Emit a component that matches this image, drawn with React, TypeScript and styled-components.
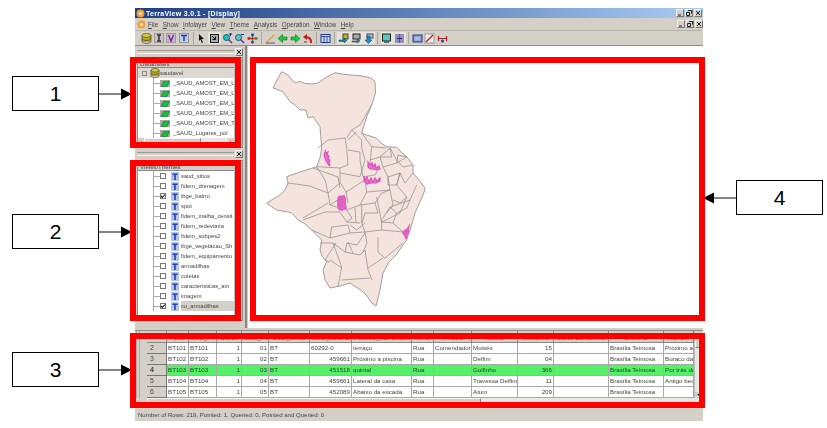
import React from 'react';
import styled, {createGlobalStyle} from 'styled-components';

const GlobalStyle = createGlobalStyle`
    html, body {
        margin: 0;
        padding: 0;
        background: #fff;
    }
`;

const ui = '"Liberation Sans", Arial, sans-serif';
const face = '#d4d0c8';

const Page = styled.div`
    position: relative;
    width: 827px;
    height: 428px;
    display: flex;
    overflow: hidden;
    background: #fff;
    font-family: ${ui};
`;

const LeftColumn = styled.div`
    width: 135px;
    box-sizing: border-box;
    padding: 76px 0 0 12px;
    display: flex;
    flex-direction: column;
    gap: 103px;
    flex: none;
`;

const RightColumn = styled.div`
    flex: 1;
    padding-top: 180px;
`;

const Callout = styled.div`
    display: flex;
    align-items: center;
    height: 35px;
`;

const CalloutBox = styled.div`
    width: 87px;
    height: 35px;
    box-sizing: border-box;
    border: 1px solid #000;
    display: flex;
    align-items: center;
    justify-content: center;
    font-size: 21px;
    color: #000;
    flex: none;
`;

const Frame = styled.div<{$x: number; $y: number; $w: number; $h: number}>`
    position: absolute;
    left: ${p => p.$x}px;
    top: ${p => p.$y}px;
    width: ${p => p.$w}px;
    height: ${p => p.$h}px;
    box-sizing: border-box;
    border: 6px solid #ff0000;
`;

const AppWindow = styled.div`
    width: 568px;
    height: 413px;
    margin-top: 8px;
    flex: none;
    display: flex;
    flex-direction: column;
    background: ${face};
    filter: blur(0.45px);
    color: #444;
    font-size: 6.2px;
`;

const TitleBar = styled.div`
    height: 10px;
    display: flex;
    align-items: center;
    padding: 0 1px;
    background: linear-gradient(90deg, #1f3f82 0%, #5f82bb 50%, #a9cdf3 100%);
    color: #fff;
    font-weight: bold;
    font-size: 7px;
    gap: 1px;
`;

const TitleText = styled.span`
    flex: 1;
    letter-spacing: 0.3px;
`;

const WinButtons = styled.div`
    display: flex;
    gap: 1px;
`;

const WinButton = styled.div`
    width: 8px;
    height: 8px;
    background: ${face};
    border: 1px solid;
    border-color: #f4f2ee #777 #777 #f4f2ee;
    box-sizing: border-box;
    display: flex;
    align-items: center;
    justify-content: center;
    svg {
        display: block;
    }
`;

const MenuBar = styled.div`
    height: 13px;
    display: flex;
    align-items: center;
    padding: 0 0 0 2px;
    font-size: 6.3px;
    border-bottom: 1px solid #b5b2aa;
    box-sizing: border-box;
`;

const MenuItems = styled.div`
    flex: 1;
    display: flex;
    gap: 4.5px;
    margin-left: 2px;
    padding-top: 1px;
    u {
        text-decoration: underline;
    }
`;

const Toolbar = styled.div`
    height: 15px;
    box-sizing: border-box;
    display: flex;
    align-items: center;
    padding-left: 5px;
    border-bottom: 1px solid #8f8d87;
`;

const ToolGroup = styled.div`
    display: flex;
`;

const ToolDivider = styled.div`
    width: 1px;
    height: 12px;
    margin: 0 2.15px;
    background: #a8a59e;
`;

const ToolButton = styled.div<{$on?: boolean}>`
    width: 12.6px;
    height: 12px;
    display: flex;
    align-items: center;
    justify-content: center;
    background: ${p => (p.$on ? '#e6e3dd' : 'transparent')};
    svg {
        display: block;
    }
`;

const Workspace = styled.div`
    height: 282px;
    display: flex;
`;

const Dock = styled.div`
    width: 110px;
    flex: none;
    box-sizing: border-box;
    padding-left: 2px;
    display: flex;
    flex-direction: column;
`;

const DockHandle = styled.div<{$height: number}>`
    height: ${p => p.$height}px;
    flex: none;
    display: flex;
    align-items: center;
    gap: 1px;
    padding-right: 2px;
`;

const Grip = styled.div`
    flex: 1;
    height: 2px;
    border-top: 1px solid #9c9a94;
    border-bottom: 1px solid #f5f4f0;
`;

const DockPanel = styled.div<{$height: number}>`
    height: ${p => p.$height}px;
    width: 106px;
    flex: none;
    display: flex;
    background: #fff;
    border: 1px solid #8f8d87;
    box-sizing: border-box;
    overflow: hidden;
`;

const PanelBody = styled.div`
    flex: 1;
    min-width: 0;
    display: flex;
    flex-direction: column;
`;

const PanelHeader = styled.div`
    height: 10px;
    flex: none;
    background: ${face};
    border-bottom: 1px solid #888;
    box-sizing: border-box;
    line-height: 11px;
    padding-left: 2px;
    overflow: hidden;
    white-space: nowrap;
`;

const TreeRows = styled.div`
    flex: 1;
    min-height: 0;
    overflow: hidden;
`;

const TreeRow = styled.div<{$root?: boolean}>`
    height: 10px;
    display: flex;
    align-items: center;
    white-space: nowrap;
    font-size: 5.8px;
    padding-left: ${p => (p.$root ? 4 : 15)}px;
    background: ${p => (p.$root ? '#ddd9d2' : 'transparent')};
`;

const Connector = styled.div`
    width: 7px;
    height: 10px;
    flex: none;
    box-sizing: border-box;
    border-left: 1px solid #aaa;
    position: relative;
    &::after {
        content: '';
        position: absolute;
        left: 0;
        top: 5px;
        width: 7px;
        border-top: 1px solid #aaa;
    }
`;

const Expander = styled.div`
    width: 5px;
    height: 5px;
    box-sizing: border-box;
    border: 1px solid #888;
    margin-right: 3px;
    flex: none;
`;

const ThemeLabel = styled.span<{$selected?: boolean}>`
    margin-left: 2px;
    flex: 1;
    align-self: stretch;
    line-height: 10px;
    background: ${p => (p.$selected ? '#d4d0c8' : 'transparent')};
`;

const CheckBox = styled.div`
    width: 6px;
    height: 6px;
    flex: none;
    box-sizing: border-box;
    border: 1px solid #777;
    background: #fff;
    margin-right: 5px;
    position: relative;
    svg {
        position: absolute;
        left: -1px;
        top: -1px;
    }
`;

const HScroll = styled.div<{$height: number}>`
    height: ${p => p.$height}px;
    flex: none;
    background: #e9e7e2;
    display: flex;
    align-items: stretch;
`;

const ScrollThumb = styled.div<{$grow: number}>`
    flex: ${p => p.$grow};
    background: ${face};
    border: 1px solid;
    border-color: #f5f4f0 #888 #888 #f5f4f0;
    box-sizing: border-box;
`;

const ScrollTrack = styled.div<{$grow: number}>`
    flex: ${p => p.$grow};
`;

const ScrollArrow = styled.div<{$dir: 'left' | 'right' | 'up' | 'down'}>`
    width: ${p => (p.$dir === 'up' || p.$dir === 'down' ? '100%' : '6px')};
    height: ${p => (p.$dir === 'up' || p.$dir === 'down' ? '6px' : 'auto')};
    flex: none;
    background: ${face};
    display: flex;
    align-items: center;
    justify-content: center;
    &::after {
        content: '';
        border: 2px solid transparent;
        ${p => (p.$dir === 'left' ? 'border-right-color: #111; border-left-width: 0;' : '')}
        ${p => (p.$dir === 'right' ? 'border-left-color: #111; border-right-width: 0;' : '')}
        ${p => (p.$dir === 'up' ? 'border-bottom-color: #111; border-top-width: 0;' : '')}
        ${p => (p.$dir === 'down' ? 'border-top-color: #111; border-bottom-width: 0;' : '')}
    }
`;

const VScroll = styled.div`
    width: 8px;
    flex: none;
    background: #e9e7e2;
    border-left: 1px solid #bbb;
    box-sizing: border-box;
    display: flex;
    flex-direction: column;
`;

const Sash = styled.div`
    width: 3px;
    flex: none;
    box-sizing: border-box;
    border-left: 2px solid #8a8883;
`;

const MapPane = styled.div`
    flex: 1;
    background: #fff;
    svg {
        display: block;
    }
`;

const Splitter = styled.div`
    height: 3px;
    flex: none;
    border-bottom: 1px solid #8f8d87;
    box-sizing: border-box;
`;

const GridArea = styled.div`
    height: 67px;
    flex: none;
    display: flex;
`;

const Gutter = styled.div`
    width: 12px;
    flex: none;
    box-sizing: border-box;
    margin-left: 1px;
    margin-right: -1px;
    background: linear-gradient(90deg, #aaa 0 1px, ${face} 1px 3px, #aaa 3px 4px, ${face} 4px);
`;

const GridScroll = styled.div`
    width: 547px;
    flex: none;
    overflow: hidden;
    background: #fff;
`;

const Grid = styled.table`
    table-layout: fixed;
    width: 547px;
    border-collapse: separate;
    border-spacing: 0;
    font-size: 6.2px;
    color: #444;
`;

const HeadCell = styled.th`
    height: 12px;
    line-height: 9px;
    padding: 2px 1px 0;
    font-weight: normal;
    text-align: center;
    white-space: nowrap;
    overflow: hidden;
    background: ${face};
    border-right: 1px solid #888;
    border-bottom: 1px solid #888;
    box-sizing: border-box;
`;

const Cell = styled.td<{$right?: boolean; $green?: boolean}>`
    height: 11px;
    line-height: 10px;
    padding: 0 1px;
    white-space: nowrap;
    overflow: hidden;
    text-align: ${p => (p.$right ? 'right' : 'left')};
    background: ${p => (p.$green ? '#55f068' : '#fff')};
    color: ${p => (p.$green ? '#224422' : '#444')};
    border-right: 1px solid #aaa;
    border-bottom: 1px solid #aaa;
    box-sizing: border-box;
`;

const RowHead = styled.td<{$current?: boolean}>`
    height: 11px;
    line-height: 10px;
    padding: 0 0 0 3px;
    font-size: 7px;
    font-weight: ${p => (p.$current ? 'bold' : 'normal')};
    background: ${face};
    border-right: 1px solid #777;
    border-bottom: 1px solid #777;
    box-sizing: border-box;
`;

const GridBar = styled.div`
    height: 7px;
    flex: none;
    margin-left: 12px;
    display: flex;
    background: #e9e7e2;
`;

const StatusBar = styled.div`
    height: 16px;
    flex: none;
    box-sizing: border-box;
    padding: 3px 0 0 3px;
    display: flex;
    align-items: center;
    font-size: 6.05px;
    color: #444;
    border-top: 1px solid #efede8;
`;

const Close = () => (
    <svg width="6" height="6" viewBox="0 0 6 6">
        <path d="M1 1l4 4M5 1l-4 4" stroke="#222" strokeWidth="1"/>
    </svg>
);
const Minimize = () => (
    <svg width="6" height="6" viewBox="0 0 6 6">
        <path d="M1 5h3" stroke="#222" strokeWidth="1"/>
    </svg>
);
const Restore = () => (
    <svg width="6" height="6" viewBox="0 0 6 6">
        <path d="M2 .5h3.5v3M.5 2.5h3v3h-3z" stroke="#222" strokeWidth="1" fill="none"/>
    </svg>
);

const Flower = () => (
    <svg width="9" height="9" viewBox="0 0 9 9">
        <circle cx="4.5" cy="4.5" r="4" fill="#f0a040"/>
        <circle cx="4.5" cy="4.5" r="1.5" fill="#ffe8b0"/>
    </svg>
);

const DbIcon = ({size = 10}: {size?: number}) => (
    <svg width={size} height={size} viewBox="0 0 11 11">
        <rect x="1" y="2" width="9" height="7" fill="#b8a818"/>
        <ellipse cx="5.5" cy="2.5" rx="4.5" ry="2" fill="#d8cc30" stroke="#444" strokeWidth=".7"/>
        <path d="M1 2.5v6c0 1 2 2 4.5 2s4.5-1 4.5-2v-6M1 5.5c0 1 2 2 4.5 2s4.5-1 4.5-2" fill="none" stroke="#444" strokeWidth=".7"/>
    </svg>
);

const LayerIcon = () => (
    <svg width="10" height="7" viewBox="0 0 10 7" style={{flex: 'none', marginRight: 3}}>
        <rect width="10" height="7" fill="#a8a8a8"/>
        <path d="M1 6.5L3.5 1.5H9.5L7 6.5z" fill="#14c038" stroke="#0a6a28" strokeWidth=".5"/>
    </svg>
);

const ThemeIcon = () => (
    <svg width="8" height="9" viewBox="0 0 8 9" style={{flex: 'none'}}>
        <rect width="8" height="9" fill="#b4c4dc"/>
        <path d="M1.5 1.5h5v1.4h-1.7v5h-1.6v-5h-1.7z" fill="#1c3fc8"/>
    </svg>
);

const Check = () => (
    <svg width="6" height="6" viewBox="0 0 6 6">
        <path d="M1 3l1.4 1.5L5 1.5" fill="none" stroke="#111" strokeWidth="1.1"/>
    </svg>
);

const letter = (bg: string, stroke: string, d: string) => (
    <svg width="10" height="10" viewBox="0 0 10 10">
        <rect x=".5" y=".5" width="9" height="9" fill={bg} stroke="#9a9a9a"/>
        <path d={d} fill="none" stroke={stroke} strokeWidth="1.5"/>
    </svg>
);

const sketch = (children: React.ReactNode) => (
    <svg width="11" height="11" viewBox="0 0 11 11">{children}</svg>
);

const tools: {on?: boolean; glyph: React.ReactNode}[][] = [
    [
        {glyph: <DbIcon size={11}/>},
        {glyph: letter('#c8c4bc', '#333', 'M3 2h4M5 2v6M3 8h4')},
        {glyph: letter('#c8bcd0', '#8020a0', 'M2.5 2l2.5 6 2.5-6')},
        {glyph: letter('#c0cce4', '#1c3fc8', 'M2 2.5h6M5 2.5v5.5')},
    ],
    [
        {glyph: sketch(<path d="M3 1l5 5H5.5l1.5 3.5-1.2.5L4.5 6.5 3 8z" fill="#111"/>)},
        {on: true, glyph: sketch(<g><rect x="1.5" y="1.5" width="8" height="8" fill="#aaa" stroke="#222"/><path d="M3 3l3.5 3.5M6.5 3.5v3h-3" stroke="#111" fill="none"/></g>)},
        {glyph: sketch(<g><circle cx="4.5" cy="4.5" r="3" fill="#20c8b8" stroke="#08607a"/><path d="M6.5 6.5L10 10" stroke="#8020a0" strokeWidth="1.4"/><path d="M7 1h3M8.5 0v3" stroke="#1030c0"/></g>)},
        {glyph: sketch(<g><circle cx="4.5" cy="4.5" r="3" fill="#60c8c0" stroke="#08607a"/><path d="M6.5 6.5L10 10" stroke="#8020a0" strokeWidth="1.4"/><path d="M7 1.5h3" stroke="#1030c0"/></g>)},
        {glyph: sketch(<g><path d="M5.5 1v9" stroke="#20a040" strokeWidth="1.4"/><path d="M1 5.5h9" stroke="#d02020" strokeWidth="1.4"/><circle cx="5.5" cy="1.8" r="1.4" fill="#1030c0"/><circle cx="1.8" cy="5.5" r="1.4" fill="#d02020"/><circle cx="9.2" cy="5.5" r="1.4" fill="#20a040"/><circle cx="5.5" cy="9.2" r="1.4" fill="#7020a0"/></g>)},
    ],
    [
        {glyph: sketch(<g><path d="M1 10L9.5 1.5" stroke="#d8b020" strokeWidth="1.6"/><path d="M1 10h9" stroke="#7040c0" strokeWidth="1"/></g>)},
        {glyph: sketch(<path d="M1 5.5L5.5 1.5v2.5H10v3H5.5v2.5z" fill="#18d030" stroke="#0a7018" strokeWidth=".6"/>)},
        {glyph: sketch(<path d="M10 5.5L5.5 1.5v2.5H1v3h4.5v2.5z" fill="#18d030" stroke="#0a7018" strokeWidth=".6"/>)},
        {glyph: sketch(<g><path d="M9 10C9.5 6 7 4 4 4" fill="none" stroke="#c81818" strokeWidth="2"/><path d="M1 4l4-3v6z" fill="#c81818"/><path d="M2 9h3" stroke="#444"/></g>)},
    ],
    [
        {glyph: sketch(<g><rect x="1" y="1.5" width="9" height="8" fill="#c8d8f0" stroke="#203a90"/><path d="M1 3.5h9M4 3.5v6M7 3.5v6" stroke="#203a90" strokeWidth=".8"/></g>)},
    ],
    [
        {on: true, glyph: sketch(<g><rect x="5" y="1" width="5" height="5" fill="#c8b020" stroke="#444"/><path d="M1 7h5V5l3 2.5-3 2.5V8.5H1z" fill="#1890a8" stroke="#083048" strokeWidth=".5"/></g>)},
        {on: true, glyph: sketch(<g><rect x="2" y="1" width="7" height="5" fill="#aaa" stroke="#222"/><path d="M1 8h5V6l3 2-3 2V9H1z" fill="#1890a8" stroke="#083048" strokeWidth=".5"/></g>)},
        {on: true, glyph: sketch(<g><rect x="4" y="1" width="6" height="4" fill="#b0c8e0" stroke="#445"/><path d="M4 3h3v4h2l-3.5 3.5L2 7h2z" fill="#1890d0" stroke="#083048" strokeWidth=".5"/></g>)},
    ],
    [
        {on: true, glyph: sketch(<g><rect x="1.5" y="1" width="8" height="7" fill="#58c8c0" stroke="#222"/><rect x="3" y="8" width="5" height="2" fill="#666"/></g>)},
        {on: true, glyph: sketch(<g><rect x="1" y="1" width="9" height="9" fill="#9090b0"/><path d="M5.5 1v9" stroke="#d02090" strokeWidth="1.2"/><path d="M3 5.5h5" stroke="#2020c0"/></g>)},
    ],
    [
        {glyph: sketch(<g><rect x="1" y="2" width="9" height="7" fill="#8090c8" stroke="#203a90"/><rect x="2.5" y="3.5" width="6" height="4" fill="#b0b8e0"/></g>)},
        {glyph: sketch(<g><rect x="1" y="1" width="9" height="9" fill="#f0efec" stroke="#999"/><path d="M2 9L9 2" stroke="#c02020" strokeWidth="1.4"/></g>)},
        {glyph: sketch(<g><path d="M1.5 3v5M9.5 3v5M1.5 5.5h8" stroke="#b02020" strokeWidth="1.2"/><circle cx="5.5" cy="8" r="1.6" fill="#2040d0"/></g>)},
    ],
];

const menus: [string, string][] = [
    ['F', 'ile'], ['S', 'how'], ['I', 'nfolayer'], ['V', 'iew'], ['T', 'heme'],
    ['A', 'nalysis'], ['O', 'peration'], ['W', 'indow'], ['H', 'elp'],
];

const layers = ['_SAUD_AMOST_EM_L', '_SAUD_AMOST_EM_L', '_SAUD_AMOST_EM_L', '_SAUD_AMOST_EM_L', '_SAUD_AMOST_EM_T', '_SAUD_Lugares_pol'];

const themes: {name: string; checked?: boolean; selected?: boolean}[] = [
    {name: 'saud_sitios'},
    {name: 'fidem_drenagem'},
    {name: 'ibge_bairro', checked: true},
    {name: 'spot'},
    {name: 'fidem_malha_censit'},
    {name: 'fidem_redeviaria'},
    {name: 'fidem_subpes2'},
    {name: 'ibge_vegetacao_Sh'},
    {name: 'fidem_equipamento'},
    {name: 'armadilhas'},
    {name: 'coletas'},
    {name: 'caracteristicas_am'},
    {name: 'imagem'},
    {name: 'co_armadilhas', checked: true, selected: true},
];

const columns = [
    {w: 20, t: ''}, {w: 22, t: 'Atual'}, {w: 28, t: 'COD_PT'}, {w: 25, t: 'CONS'}, {w: 27, t: 'NUM_PT'},
    {w: 41, t: 'COD_SITIO'}, {w: 42, t: 'COD_LOCAL'}, {w: 60, t: 'PONTO_REFEREN'}, {w: 22, t: 'TIPO'},
    {w: 38, t: 'TITULO'}, {w: 46, t: 'NOME'}, {w: 36, t: 'NUMERO'}, {w: 55, t: 'COMPLEMENTO'},
    {w: 55, t: 'BAIRRO'}, {w: 30, t: 'REFER'},
];

const rightAligned = new Set([2, 3, 10]);

const rows: {n: number; cells: string[]; current?: boolean}[] = [
    {n: 2, cells: ['BT101', 'BT101', '1', '01', 'BT', '60292-0', 'terraço', 'Rua', 'Comendador', 'Moisés', '15', '', 'Brasília Teimosa', 'Próximo ac']},
    {n: 3, cells: ['BT102', 'BT102', '1', '02', 'BT', '459661', 'Próximo a piscina', 'Rua', '', 'Delfim', '04', '', 'Brasília Teimosa', 'Buraco da']},
    {n: 4, current: true, cells: ['BT103', 'BT103', '1', '03', 'BT', '451518', 'quintal', 'Rua', '', 'Golfinho', '366', '', 'Brasília Teimosa', 'Por trás do']},
    {n: 5, cells: ['BT104', 'BT104', '1', '04', 'BT', '459661', 'Lateral da casa', 'Rua', '', 'Travessa Delfim', '11', '', 'Brasília Teimosa', 'Antigo bec']},
    {n: 6, cells: ['BT105', 'BT105', '1', '05', 'BT', '452089', 'Abaixo da escada', 'Rua', '', 'Atum', '209', '', 'Brasília Teimosa', '']},
];

const outline = 'M281.7 71.7L288 75 291 79 295 82.7 300 81.5 305 83.3 312 84 318 83 325 78 335 72.7 342 74 350 75 358 75.5 365 76.7 371 78 375 81.7 375.5 93 371.7 105 366.7 116.7 361.7 133.3 370 136 376.7 138.3 381 143 386.7 146.7 396.7 147.3 401 152 406.7 156.7 413 165 413 173 419 180 425 188 425 190 420 202 415 213 411 227 406.7 240 403 245 396 255 389 262 383 273 380 290 376 306 371.7 303 367 296 363 291.7 350 283 340 286 330 288 325 280 323 270 326.7 261.7 322 256 320 250 321.7 240 311.7 230 305 224 298 220 292 213 286.7 211.7 276.7 210 266.7 203.3 273 199 280 195 285 190 288 183 286.7 176.7 300 172 316.7 166.7 320 158 321.7 148 320 126.7 313 116.7 308 118 306 110 300 110 295 105 290 101.7 283 91.7 273 88 277 80z';

const inner = [
    'M371.7 105L360 125 351.7 130 346.7 138',
    'M318 148L328 140 345 138 346.7 148 348 165 340 168 316.7 166.7',
    'M351.7 130L361.7 140 361.7 148 365 160 360 176.7 340 173',
    'M361.7 133L371.7 146.7 386.7 148',
    'M371.7 146.7L370 163 378 170 375 175 363 177',
    'M380 157L390 148M380 157L383 167 396.7 163 406.7 157',
    'M390 148L396.7 160 403 167 413 165',
    'M383 167L388 177 400 173 405 183 413 173',
    'M340 168L340 182 346 192 365 180',
    'M348 150L360 152 360 160 363 177',
    'M356.7 131.7L348 140',
    'M380 157L370 160',
    'M390 148L391.7 157 380 157',
    'M396.7 163L398 155 406.7 157',
    'M388 177L388 185 396.7 185 400 173',
    'M313 168L338 177 340 188',
    'M328 193L340 183M345 195L330 205',
    'M328 203L303 218',
    'M328 193L330 205 346.7 210 360 205 366.7 192 365 180',
    'M303 220L325 212 340 212 346.7 222 360 223',
    'M288 183L310 186 328 193',
    'M331.7 227L348 225 350 233',
    'M311.7 230L330 238 331.7 227',
    'M330 238L350 233 365 232 381.7 230 403 232',
    'M381.7 230L381.7 220 390 207 410 200 416.7 185',
    'M333 243L345 252 360 255 365 250 368 270 372 280',
    'M341.7 280L370 278',
    'M333 243L341.7 267 338 287',
    'M378 237L378 252 385 258 403 243',
    'M368 268L383 258',
    'M365 232L367 243 363 252',
    'M361.7 205L361.7 223 365 232',
    'M376.7 197L381.7 223',
    'M366.7 192L390 190 393 205 386.7 213',
    'M396.7 185L406.7 197 400 213 382 222',
    'M388 177L390 190M400 173L396.7 185',
    'M346 192L348 203M355 208L356 222',
    'M316.7 166.7L325 180 328 193',
    'M346.7 210L352 218 346.7 222',
    'M360 205L375 203 378 213 365 213 362 223',
    'M375 203L381.7 193 390 190',
    'M390 207L396.7 213 406.7 208 410 200',
    'M393 200L400 203 406.7 197',
    'M396.7 213L393 223 383 222',
    'M393 223L403 232',
    'M350 225L356.7 230 365 223',
    'M348 242L353 253',
    'M330 262L325 260 336 243',
    'M345 252L347 243 357 245 365 233',
    'M333 243L320 243',
    'M341.7 268L330 260',
];

const pinkLace = [
    'M325 150l1 3 2-1-1 3 2 1-1 3 2 1-1 3 1 3-2-2-2-3-1-3-1-3 1-3',
    'M368 162l2 3 2-2 1 4 2-3 1 4 3-2 1 3-4 1-3-1-3 0-2-2z',
    'M364 176l1 4 2-3 2 5 2-4 2 4 2-4 2 3 3-3 0 3-4 2-5 0-4 1-3-3z',
];

const pinkSolid = [
    'M338 196l6-1 2 3 0 5 1 6-3 1-2 1-4-1-1-5 0-5z',
    'M403 231l4-3 3-5-1 9-2 6-1 2-2-4-2-3z',
];

const Arrow = ({flip}: {flip?: boolean}) => (
    <svg width="33" height="14" viewBox="0 0 33 14" style={{flex: 'none', transform: flip ? 'scaleX(-1)' : undefined}}>
        <path d="M0 7H22" stroke="#333" strokeWidth="1.2"/>
        <path d="M22 1.5L33 7 22 12.5z" fill="#000"/>
    </svg>
);

const App: React.FC = () => (
    <Page>
        <GlobalStyle/>
        <LeftColumn>
            {['1', '2', '3'].map(n => (
                <Callout key={n}>
                    <CalloutBox>{n}</CalloutBox>
                    <Arrow/>
                </Callout>
            ))}
        </LeftColumn>

        <AppWindow>
            <TitleBar>
                <Flower/>
                <TitleText>TerraView 3.0.1 - [Display]</TitleText>
                <WinButtons>
                    <WinButton><Minimize/></WinButton>
                    <WinButton><Restore/></WinButton>
                    <WinButton><Close/></WinButton>
                </WinButtons>
            </TitleBar>
            <MenuBar>
                <Flower/>
                <MenuItems>
                    {menus.map(([key, rest]) => <span key={key}><u>{key}</u>{rest}</span>)}
                </MenuItems>
                <WinButtons>
                    <WinButton><Minimize/></WinButton>
                    <WinButton><Restore/></WinButton>
                    <WinButton><Close/></WinButton>
                </WinButtons>
            </MenuBar>
            <Toolbar>
                {tools.map((group, i) => (
                    <React.Fragment key={i}>
                        {i > 0 && <ToolDivider/>}
                        <ToolGroup>
                            {group.map((tool, j) => <ToolButton key={j} $on={tool.on}>{tool.glyph}</ToolButton>)}
                        </ToolGroup>
                    </React.Fragment>
                ))}
            </Toolbar>
            <Workspace>
                <Dock>
                    <DockHandle $height={11}>
                        <Grip/>
                        <WinButton><Close/></WinButton>
                    </DockHandle>
                    <DockPanel $height={91}>
                        <PanelBody>
                            <PanelHeader>Databases</PanelHeader>
                            <TreeRows>
                                <TreeRow $root>
                                    <Expander/>
                                    <DbIcon/>
                                    <span>saudavel</span>
                                </TreeRow>
                                {layers.map((name, i) => (
                                    <TreeRow key={i}>
                                        <Connector/>
                                        <LayerIcon/>
                                        <span>{name}</span>
                                    </TreeRow>
                                ))}
                            </TreeRows>
                            <HScroll $height={9}>
                                <ScrollArrow $dir="left"/>
                                <ScrollThumb $grow={6}/>
                                <ScrollTrack $grow={3}/>
                                <ScrollArrow $dir="right"/>
                            </HScroll>
                        </PanelBody>
                        <VScroll/>
                    </DockPanel>
                    <DockHandle $height={12}>
                        <Grip/>
                        <WinButton><Close/></WinButton>
                    </DockHandle>
                    <DockPanel $height={161}>
                        <PanelBody>
                            <PanelHeader>Views/Themes</PanelHeader>
                            <TreeRows>
                                {themes.map(theme => (
                                    <TreeRow key={theme.name}>
                                        <Connector/>
                                        <CheckBox>{theme.checked && <Check/>}</CheckBox>
                                        <ThemeIcon/>
                                        <ThemeLabel $selected={theme.selected}>{theme.name}</ThemeLabel>
                                    </TreeRow>
                                ))}
                            </TreeRows>
                        </PanelBody>
                        <VScroll/>
                    </DockPanel>
                </Dock>
                <Sash/>
                <MapPane>
                    <svg width="455" height="282" viewBox="248 46 455 282">
                        <path d={outline} fill="#f5e3dd" stroke="#8a8a8a" strokeWidth=".8"/>
                        {inner.map((d, i) => <path key={i} d={d} fill="none" stroke="#8a8a8a" strokeWidth=".7"/>)}
                        {pinkLace.map((d, i) => <path key={i} d={d} fill="#e870cf" stroke="#e050c0" strokeWidth="1.2"/>)}
                        {pinkSolid.map((d, i) => <path key={i} d={d} fill="#e260c4"/>)}
                    </svg>
                </MapPane>
            </Workspace>
            <Splitter/>
            <GridArea>
                <Gutter/>
                <GridScroll>
                    <Grid>
                        <colgroup>
                            {columns.map((col, i) => <col key={i} width={col.w}/>)}
                        </colgroup>
                        <thead>
                            <tr>
                                {columns.map((col, i) => <HeadCell key={i}>{col.t}</HeadCell>)}
                            </tr>
                        </thead>
                        <tbody>
                            {rows.map(row => (
                                <tr key={row.n}>
                                    <RowHead $current={row.current}>{row.n}</RowHead>
                                    {row.cells.map((value, i) => (
                                        <Cell
                                            key={i}
                                            $green={row.current}
                                            $right={rightAligned.has(i) || (i === 5 && row.n > 2)}
                                        >
                                            {value}
                                        </Cell>
                                    ))}
                                </tr>
                            ))}
                        </tbody>
                    </Grid>
                </GridScroll>
                <VScroll>
                    <ScrollArrow $dir="up"/>
                    <ScrollThumb $grow={1}/>
                    <ScrollTrack $grow={5}/>
                    <ScrollArrow $dir="down"/>
                </VScroll>
            </GridArea>
            <GridBar>
                <ScrollThumb $grow={6}/>
                <ScrollTrack $grow={4}/>
            </GridBar>
            <StatusBar>Number of Rows: 219, Pointed: 1, Queried: 0, Pointed and Queried: 0</StatusBar>
        </AppWindow>

        <RightColumn>
            <Callout>
                <Arrow flip/>
                <CalloutBox>4</CalloutBox>
            </Callout>
        </RightColumn>

        <Frame $x={130} $y={57} $w={111} $h={91}/>
        <Frame $x={130} $y={160} $w={111} $h={161}/>
        <Frame $x={250} $y={57} $w={455} $h={264}/>
        <Frame $x={130} $y={333} $w={575} $h={75}/>
    </Page>
);

export default App;
